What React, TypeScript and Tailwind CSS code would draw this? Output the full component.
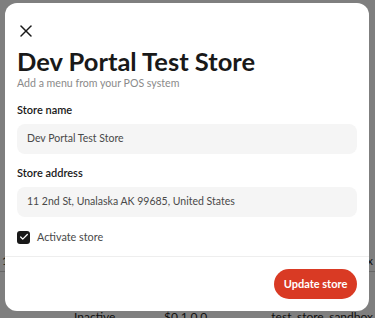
import { X, Check } from 'lucide-react';

const FONT = { fontFamily: 'Lato, "Noto Sans", sans-serif' };

const Field = ({ label, value }: { label: string; value: string }) => (
  <div className="flex flex-col">
    <label className="text-[11px] font-semibold text-[#191919] leading-[16px] mb-[6px]">{label}</label>
    <div className="h-[30px] rounded-[8px] bg-[#f5f5f5] flex items-center px-[10px] text-[10.5px] text-[#494949]">
      {value}
    </div>
  </div>
);

export default function App() {
  return (
    <div className="relative w-[375px] h-[318px] overflow-hidden bg-white" style={FONT}>
      {/* page behind the dialog */}
      <div className="flex flex-col pt-[250px] text-[12px] text-[#222]">
        <div className="h-[22px] border-b border-[#ccc] flex items-center justify-between px-[2px]">
          <span>1</span>
          <span>x</span>
        </div>
        <div className="flex items-center pt-[36px] pl-[74px] pr-[2px]">
          <span className="w-[90px]">Inactive</span>
          <span>$0.1.0.0</span>
          <span className="ml-auto">test_store_sandbox</span>
        </div>
      </div>
      <div className="absolute inset-0 bg-[#000]/50" />

      <div className="absolute left-[5px] top-[3px] w-[364px] h-[308px] rounded-[12px] bg-white flex flex-col">
        <div className="px-[12px] pt-[18px] flex flex-col">
          <button className="w-[20px] h-[20px] flex items-center justify-center text-[#191919] -ml-[1px]">
            <X size={20} strokeWidth={1.8} />
          </button>
          <h1 className="mt-[5px] text-[25.5px] leading-[30px] font-bold text-[#191919]">
            Dev Portal Test Store
          </h1>
          <p className="text-[10.6px] leading-[14px] text-[#8a8a8a]">Add a menu from your POS system</p>

          <div className="mt-[12px] flex flex-col gap-[11px]">
            <Field label="Store name" value="Dev Portal Test Store" />
            <Field label="Store address" value="11 2nd St, Unalaska AK 99685, United States" />
          </div>

          <div className="mt-[12px] h-[16px] flex items-center gap-[7px]">
            <span className="w-[13px] h-[13px] rounded-[3px] bg-[#191919] flex items-center justify-center">
              <Check size={10} strokeWidth={3} className="text-white" />
            </span>
            <span className="text-[10.8px] text-[#494949]">Activate store</span>
          </div>
        </div>

        <div className="mt-[11px] border-t border-[#eeeeee]" />

        <div className="flex justify-end px-[12px] pt-[12px]">
          <button className="h-[30px] w-[83px] rounded-full bg-[#d93a24] text-white text-[11px] font-bold">
            Update store
          </button>
        </div>
      </div>
    </div>
  );
}
